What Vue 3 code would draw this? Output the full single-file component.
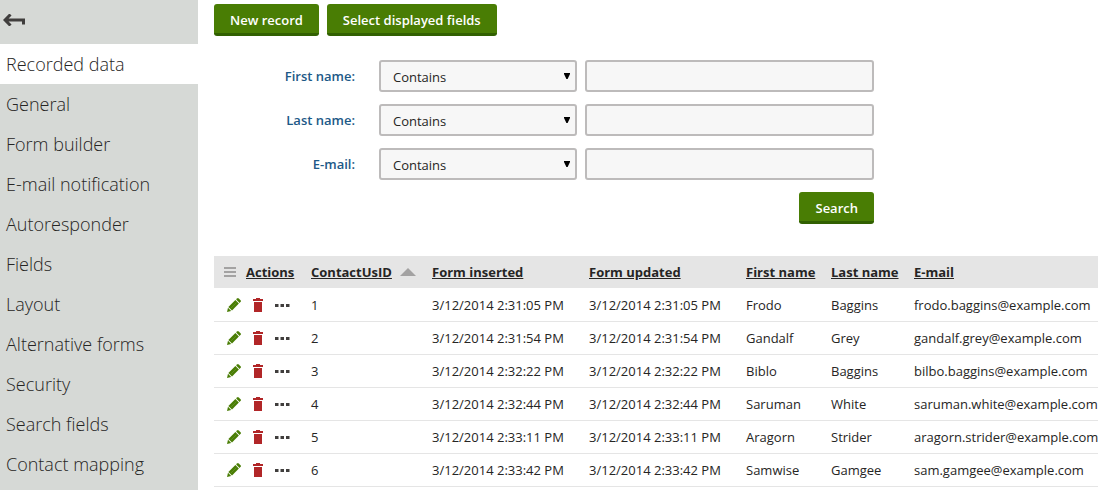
<script setup>
import { ref } from 'vue'

const menu = [
  'Recorded data', 'General', 'Form builder', 'E-mail notification', 'Autoresponder', 'Fields',
  'Layout', 'Alternative forms', 'Security', 'Search fields', 'Contact mapping',
]
const active = ref('Recorded data')

const filters = ref([
  { id: 'first', label: 'First name:', op: 'Contains', value: '' },
  { id: 'last', label: 'Last name:', op: 'Contains', value: '' },
  { id: 'email', label: 'E-mail:', op: 'Contains', value: '' },
])

const columns = ['Form inserted', 'Form updated', 'First name', 'Last name', 'E-mail']

const rows = [
  [1, '3/12/2014 2:31:05 PM', 'Frodo', 'Baggins', 'frodo.baggins@example.com'],
  [2, '3/12/2014 2:31:54 PM', 'Gandalf', 'Grey', 'gandalf.grey@example.com'],
  [3, '3/12/2014 2:32:22 PM', 'Biblo', 'Baggins', 'bilbo.baggins@example.com'],
  [4, '3/12/2014 2:32:44 PM', 'Saruman', 'White', 'saruman.white@example.com'],
  [5, '3/12/2014 2:33:11 PM', 'Aragorn', 'Strider', 'aragorn.strider@example.com'],
  [6, '3/12/2014 2:33:42 PM', 'Samwise', 'Gamgee', 'sam.gamgee@example.com'],
]
</script>

<template>
  <div class="page">
    <aside class="sidebar">
      <button class="back" type="button" aria-label="Back">
        <svg width="22" height="12" viewBox="0 0 22 12">
          <path d="M7.5 0.5 L2 6 L7.5 11.5 M2 6 H20.5 V10.5" fill="none" stroke="#403e3d" stroke-width="3" />
        </svg>
      </button>
      <nav>
        <a v-for="item in menu" :key="item" href="#" :class="{ active: item === active }" @click.prevent="active = item">{{ item }}</a>
      </nav>
    </aside>

    <main class="content">
      <div class="toolbar">
        <button class="btn" type="button">New record</button>
        <button class="btn" type="button">Select displayed fields</button>
      </div>

      <form class="filter" @submit.prevent>
        <div v-for="f in filters" :key="f.id" class="filter-row">
          <label :for="f.id">{{ f.label }}</label>
          <div class="select">
            <select v-model="f.op" :aria-label="f.label + ' condition'">
              <option>Contains</option>
            </select>
            <svg class="arrow" width="6" height="6" viewBox="0 0 6 6"><path d="M0 0 H6 V1 L3.6 6 H2.4 L0 1 Z" fill="#000" /></svg>
          </div>
          <input :id="f.id" v-model="f.value" type="text">
        </div>
        <div class="submit"><button class="btn" type="submit">Search</button></div>
      </form>

      <table>
        <colgroup>
          <col class="c-actions"><col class="c-id"><col class="c-date"><col class="c-date"><col class="c-first"><col class="c-last"><col>
        </colgroup>
        <thead>
          <tr>
            <th>
              <div class="head-actions">
                <svg width="12" height="10" viewBox="0 0 12 10"><path d="M0 1 H12 M0 5 H12 M0 9 H12" stroke="#a3a2a2" stroke-width="2" /></svg>
                <span class="title">Actions</span>
              </div>
            </th>
            <th>
              <div class="head-id">
                <a href="#" class="title">ContactUsID</a>
                <svg width="16" height="8" viewBox="0 0 16 8"><path d="M0 8 L8 0 L16 8 Z" fill="#a3a2a2" /></svg>
              </div>
            </th>
            <th v-for="c in columns" :key="c"><a href="#" class="title">{{ c }}</a></th>
          </tr>
        </thead>
        <tbody>
          <tr v-for="r in rows" :key="r[0]">
            <td>
              <div class="actions">
                <button type="button" aria-label="Edit">
                  <svg width="14" height="14" viewBox="0 0 14 14" fill="#497d04">
                    <path d="M0 14 L1 9.8 L4.2 13 Z" />
                    <path d="M1.4 9 L8.4 2.1 L11.9 5.6 L5 12.6 Z" />
                    <path d="M9.1 1.4 L10.5 0.2 Q11.1 -0.1 11.7 0.4 L13.6 2.3 Q14.1 2.9 13.8 3.5 L12.6 4.9 Z" />
                    <path d="M3.4 10.6 L9.4 4.6" stroke="#6f9a38" stroke-width=".6" />
                  </svg>
                </button>
                <button type="button" aria-label="Delete">
                  <svg width="10" height="14" viewBox="0 0 10 14" fill="#b12628"><path d="M0 1 H3 V0 H7 V1 H10 V3 H0 Z M1 4 H9 V14 H1 Z" /></svg>
                </button>
                <button type="button" aria-label="More actions">
                  <svg width="15" height="14" viewBox="0 0 15 14" fill="#403e3d"><path d="M0 6 H3.5 V9 H0 Z M5.5 6 H9 V9 H5.5 Z M11 6 H14.5 V9 H11 Z" /></svg>
                </button>
              </div>
            </td>
            <td>{{ r[0] }}</td>
            <td>{{ r[1] }}</td>
            <td>{{ r[1] }}</td>
            <td>{{ r[2] }}</td>
            <td>{{ r[3] }}</td>
            <td>{{ r[4] }}</td>
          </tr>
        </tbody>
      </table>
    </main>
  </div>
</template>

<style>
body { margin: 0; background: #fff; }
</style>

<style scoped>
.page {
  display: flex;
  min-height: 100vh;
  font-family: "Segoe UI", "Open Sans", "Noto Sans", sans-serif;
  font-size: 13px;
  color: #262524;
}
* { box-sizing: border-box; }
button, input, select { font: inherit; color: inherit; margin: 0; }
button { border: 0; padding: 0; background: none; cursor: pointer; }
svg { display: block; flex: none; }

.sidebar { flex: none; width: 198px; background: #d6d9d6; }
.back { display: flex; align-items: center; height: 44px; padding: 0 3px 4px; }
nav a {
  display: block;
  height: 40px;
  padding: 0 6px;
  font-size: 18px;
  font-weight: 300;
  line-height: 40px;
  color: #262524;
  text-decoration: none;
}
nav a.active { background: #fff; }

.content { flex: 1; min-width: 0; padding: 4px 0 0 16px; }
.toolbar { display: flex; gap: 8px; }
.btn {
  height: 32px;
  padding: 2px 16px 0;
  border-bottom: 3px solid #316001;
  border-radius: 3px;
  background: #497d04;
  color: #fff;
  font-weight: 600;
  white-space: nowrap;
}

.filter { display: flex; flex-direction: column; gap: 12px; max-width: 660px; padding: 24px 0 32px; }
.filter-row { display: grid; grid-template-columns: 141px 198px 1fr; column-gap: 24px; align-items: center; }
.filter-row label { text-align: right; font-weight: 600; color: #1d5987; }
.select { position: relative; }
select, input {
  display: block;
  width: 100%;
  height: 32px;
  padding: 0 12px;
  border: 2px solid #bdbbbb;
  border-radius: 3px;
  background: #f7f7f7;
  outline: none;
}
select { appearance: none; padding-top: 2px; }
.filter-row input { width: auto; min-width: 0; margin-left: -16px; }
.arrow { position: absolute; right: 7px; top: 13px; pointer-events: none; }
.submit { display: flex; justify-content: flex-end; }

table { width: 100%; table-layout: fixed; border-collapse: separate; border-spacing: 0; }
.c-actions { width: 89px; }
.c-id { width: 121px; }
.c-date { width: 157px; }
.c-first { width: 85px; }
.c-last { width: 83px; }
th, td { height: 33px; padding: 0 0 0 8px; text-align: left; white-space: nowrap; }
th { border-bottom: 1px solid #fff; background: #e5e5e5; font-weight: 700; }
td { border-bottom: 1px solid #e5e5e5; }
.title { color: #262524; text-decoration: underline; }
.head-actions { display: flex; align-items: center; gap: 10px; padding-left: 2px; }
.head-id { display: flex; align-items: center; gap: 8px; }
.actions { display: flex; align-items: center; padding-left: 5px; }
.actions button { display: flex; align-items: center; margin-right: 12px; }
.actions button:last-child { margin-right: 0; }
</style>
